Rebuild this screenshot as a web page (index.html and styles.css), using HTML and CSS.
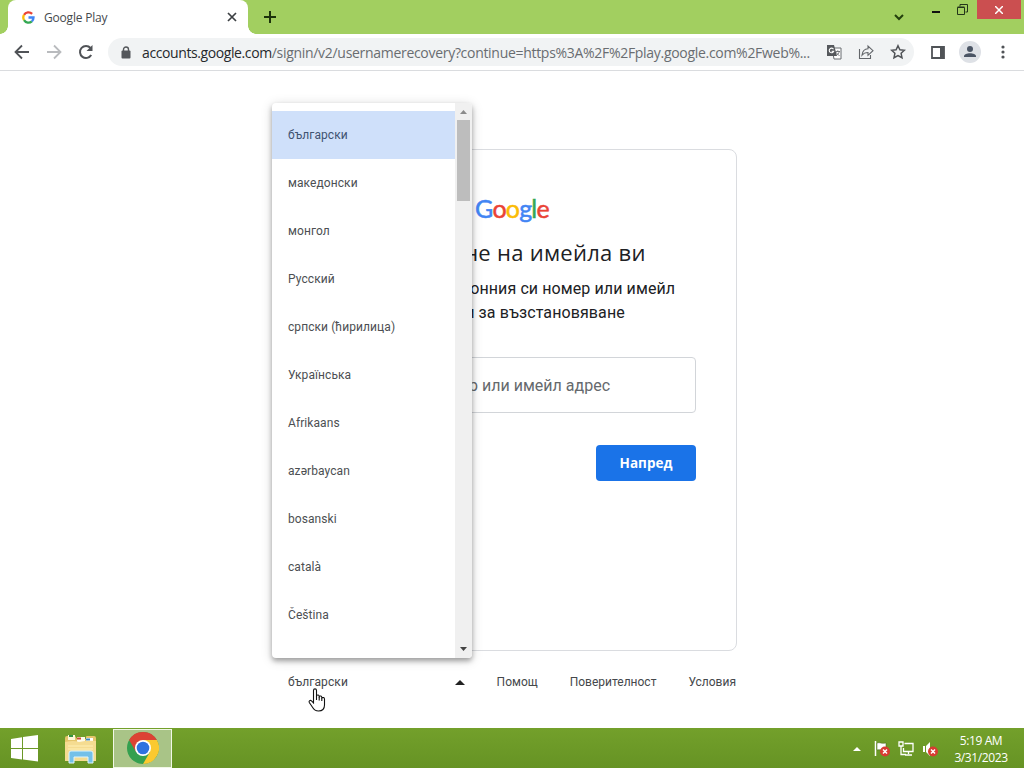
FILE: index.html
```html
<!DOCTYPE html>
<html lang="bg">
<head>
  <meta charset="UTF-8" />
  <meta name="viewport" content="width=device-width, initial-scale=1.0"/>
  <title>Google Play</title>
  <link rel="stylesheet" href="styles.css">
</head>
<body>
  <!-- Tab strip -->
  <header class="tab-strip">
    <div class="tab">
      <svg class="favicon" viewBox="0 0 14 14" fill="none" stroke-width="2.5">
        <path d="M2.2 4.2A5.5 5.5 0 0 1 10.9 3.1" stroke="#ea4335"/>
        <path d="M2.2 4.2A5.5 5.5 0 0 0 2.2 9.8" stroke="#fbbc05"/>
        <path d="M2.2 9.8A5.5 5.5 0 0 0 10.6 11.1" stroke="#34a853"/>
        <path d="M10.6 11.1A5.5 5.5 0 0 0 12.4 7H7" stroke="#4285f4"/>
      </svg>
      <span class="tab-title">Google Play</span>
      <svg class="tab-close" viewBox="0 0 10 10"><path d="M1 1l8 8M9 1L1 9" stroke="#3c4043" stroke-width="1.7"/></svg>
    </div>
    <svg class="new-tab" viewBox="0 0 12 12"><path d="M6 0v12M0 6h12" stroke="#1c330b" stroke-width="2"/></svg>
    <div class="window-controls">
      <svg class="chevron" viewBox="0 0 10 7"><path d="M1 1l4 4 4-4" fill="none" stroke="#23400d" stroke-width="2"/></svg>
      <svg class="minimize" viewBox="0 0 8 2"><path d="M0 1h8" stroke="#111" stroke-width="2"/></svg>
      <svg class="restore" viewBox="0 0 11 11" fill="none" stroke="#23351a"><path d="M.5 3.5h7v7h-7zM.5 3h7M3 2.5v-2h7.5v7.5h-2"/></svg>
      <div class="close"><svg viewBox="0 0 8 8"><path d="M0 0l8 8M8 0L0 8" stroke="#fff" stroke-width="1.5"/></svg></div>
    </div>
  </header>

  <!-- Toolbar -->
  <nav class="toolbar">
    <svg class="nav-icon" viewBox="0 0 16 16" fill="none" stroke="#505357" stroke-width="1.8"><path d="M15 8H2M8 1.5L1.5 8 8 14.5"/></svg>
    <svg class="nav-icon" viewBox="0 0 16 16" fill="none" stroke="#b9bbbe" stroke-width="1.8"><path d="M1 8h13M8 1.5L14.5 8 8 14.5"/></svg>
    <svg class="nav-icon" viewBox="0 0 16 16"><path d="M13.2 11A6 6 0 1 1 12.5 4" fill="none" stroke="#505357" stroke-width="2"/><path d="M14.5 1v6h-6z" fill="#505357"/></svg>
    <div class="address-bar">
      <svg class="lock" viewBox="0 0 10 13"><rect x=".5" y="4.5" width="9" height="8" rx="1" fill="#54575b"/><path d="M2.5 5V3.5a2.5 2.5 0 0 1 5 0V5" fill="none" stroke="#54575b" stroke-width="1.4"/></svg>
      <span class="url"><b>accounts.google.com</b>/signin/v2/usernamerecovery?continue=https%3A%2F%2Fplay.google.com%2Fweb%...</span>
      <svg class="bar-icon translate" viewBox="0 0 16 16">
        <path d="M6 4h9v11H8z" fill="#fff" stroke="#696c70"/>
        <path d="M1 1h7l3 11H1z" fill="#55585c"/>
        <path d="M7.5 5.2A2.3 2.3 0 1 0 7.7 7.3H5.6" fill="none" stroke="#fff" stroke-width="1.1"/>
        <path d="M9.5 7.5h4.5M11.8 6.3v1.2M13.3 7.5c-.5 2-1.5 3-3 4M10.5 8.5c.7 1.5 1.6 2.4 3 3" fill="none" stroke="#696c70" stroke-width=".9"/>
      </svg>
      <svg class="bar-icon share" viewBox="0 0 16 16" fill="none" stroke="#63666a" stroke-width="1.1"><path d="M1.5 5v9.5h11V11"/><path d="M4 11.2c.4-4 2.5-6.2 6-6.4V2l5 4.7-5 4.6V8.5c-2.7 0-4.5.8-6 2.7z"/></svg>
      <svg class="bar-icon star" viewBox="0 0 16 16"><path d="M8 1.7l1.9 4.1 4.5.5-3.3 3 .9 4.4L8 11.5l-4 2.2.9-4.400-3.3-3 4.5-.5z" fill="none" stroke="#505357" stroke-width="1.5"/></svg>
    </div>
    <svg class="side-panel" viewBox="0 0 14 13"><path d="M1 1h12v11H1z" fill="none" stroke="#505357" stroke-width="1.8"/><path d="M9 1h4v11H9z" fill="#505357"/></svg>
    <div class="avatar"><svg viewBox="0 0 12 12"><circle cx="6" cy="3" r="3" fill="#4b5565"/><path d="M0 11v-.8C0 8.2 3 7.2 6 7.2s6 1 6 3v.8z" fill="#4b5565"/></svg></div>
    <svg class="menu-dots" viewBox="0 0 4 14" fill="#505357"><circle cx="2" cy="2" r="1.6"/><circle cx="2" cy="7" r="1.6"/><circle cx="2" cy="12" r="1.6"/></svg>
  </nav>

  <!-- Sign-in page -->
  <main class="page">
    <section class="card">
      <div class="logo"><span class="blue">G</span><span class="red">o</span><span class="yellow">o</span><span class="blue">g</span><span class="green">l</span><span class="red">e</span></div>
      <h1>Намиране на имейла ви</h1>
      <p class="subtitle">Въведете телефонния си номер или имейл<br>адреса си за възстановяване</p>
      <div class="field">Телефонен номер или имейл адрес</div>
      <button class="next">Напред</button>
    </section>
    <footer class="page-footer">
      <div class="language">
        <span>български</span>
        <svg viewBox="0 0 10 5"><path d="M0 5l5-5 5 5z" fill="#222"/></svg>
      </div>
      <a>Помощ</a>
      <a>Поверителност</a>
      <a>Условия</a>
    </footer>

    <!-- Language dropdown, lies over the card -->
    <div class="dropdown">
      <ul>
        <li class="selected">български</li>
        <li>македонски</li>
        <li>монгол</li>
        <li>Русский</li>
        <li>српски (ћирилица)</li>
        <li>Українська</li>
        <li>Afrikaans</li>
        <li>azərbaycan</li>
        <li>bosanski</li>
        <li>català</li>
        <li>Čeština</li>
      </ul>
      <div class="scrollbar">
        <svg viewBox="0 0 7 4"><path d="M0 4l3.5-4L7 4z" fill="#8b8b8b"/></svg>
        <div class="thumb"></div>
        <svg class="down" viewBox="0 0 7 4"><path d="M0 0l3.5 4L7 0z" fill="#444"/></svg>
      </div>
    </div>

    <svg class="cursor" viewBox="0 0 18 24"><path d="M5.5 14V2.5c0-2.2 3-2.2 3 0V9V7.500c1-1 2.7-.5 2.7 1V10V8.5c1-1 2.6-.4 2.6 1V11V9.8c1.2-.8 2.7-.2 2.7 1.4V17c0 4-2.5 6-6 6-3 0-4.6-1.3-6-3.8L1.3 14.5c-.8-1.7 1-2.7 2.2-1.6l2 2z" fill="#fff" stroke="#111" stroke-width="1.1"/><path d="M8.5 8.5V12M11.2 9.5V12.5M13.8 10.5V13" stroke="#111" stroke-width="1.1"/></svg>
  </main>

  <!-- Taskbar -->
  <div class="taskbar">
    <svg class="start" viewBox="0 0 27 27" fill="#fff"><path d="M0 4l11-1.7V13H0zM12 2.1L27 0v13H12zM0 14h11v10.5L0 23zM12 14h15v12.5l-15-2z"/></svg>
    <svg class="explorer" viewBox="0 0 34 30">
      <path d="M1 4q0-2 2-2h8l2 3h9V3q0-1 1-1h7q2 0 2 2v23H1z" fill="#e5c56b"/>
      <path d="M4 1h7v5H4z" fill="#fff6d5"/><path d="M5 2h4" stroke="#349343" stroke-width="2"/>
      <path d="M13 3h8v5h-8z" fill="#fffbe9"/><path d="M13 4.500h4" stroke="#cc4c35" stroke-width="2"/>
      <path d="M22 4h7v4h-7z" fill="#fff"/><path d="M22 5.500h4" stroke="#3f86bd" stroke-width="2"/>
      <path d="M1 8q9-2 14 0 9-2 17-1v20H1z" fill="#f5dc91"/>
      <path d="M4 12h25M4 15h25" stroke="#fff0b5"/>
      <path d="M5 29V19q0-2 2-2h20q2 0 2 2v10h-5v-6H10v6z" fill="#74c0e8" stroke="#def4fd"/>
    </svg>
    <div class="task-active">
      <svg viewBox="0 0 32 32">
        <circle cx="16" cy="16" r="16" fill="#34a04f"/>
        <path d="M2.14 8A16 16 0 0 1 29.86 8H16L9.07 20z" fill="#dc4334"/>
        <path d="M29.86 8A16 16 0 0 1 16 32l6.93-12L16 8z" fill="#fbc92f"/>
        <circle cx="16" cy="16" r="8" fill="#fff"/><circle cx="16" cy="16" r="6.3" fill="#2e72df"/>
      </svg>
    </div>
    <div class="tray">
      <svg class="tray-arrow" viewBox="0 0 8 4"><path d="M0 4l4-4 4 4z" fill="#fff"/></svg>
      <svg class="tray-icon" viewBox="0 0 16 16"><path d="M1.5 0v15" stroke="#fff" stroke-width="1.5"/><path d="M3 2c3-1 4 1 9 0v7c-4 1-6-1-9 0z" fill="#fff" stroke="#3e5f16" stroke-width=".5"/><circle cx="11" cy="10.500" r="5" fill="#d83b32"/><path d="M9 8.500l4 4M13 8.500l-4 4" stroke="#fff" stroke-width="1.5"/></svg>
      <svg class="tray-icon" viewBox="0 0 16 16" fill="none" stroke="#fff" stroke-width="1.3"><path d="M1 1h4v4H1zM3 5v8.500h5M6.500 2.500H15v8H5.500V7M10.500 10.500V13M7 14h7"/></svg>
      <svg class="tray-icon" viewBox="0 0 16 16"><path d="M1 5h2v6H1zM4 5l4-4v14l-4-4z" fill="#fff"/><circle cx="11" cy="10.500" r="5" fill="#d83b32"/><path d="M9 8.500l4 4M13 8.500l-4 4" stroke="#fff" stroke-width="1.5"/></svg>
      <div class="clock"><span>5:19 AM</span><span class="date">3/31/2023</span></div>
    </div>
  </div>
</body>
</html>
```
FILE: styles.css
```css
* {
  box-sizing: border-box;
  margin: 0;
  padding: 0;
}
body {
  font-family: Roboto, sans-serif;
  width: 1024px;
  height: 768px;
  display: flex;
  flex-direction: column;
  overflow: hidden;
  background: #fff;
}
svg {
  display: block;
  flex: none;
}

/* Tab strip */
.tab-strip {
  height: 34px;
  background: #a2cf60;
  display: flex;
  align-items: flex-start;
  padding-left: 8px;
  font-family: "Open Sans", sans-serif;
}
.tab {
  position: relative;
  width: 240px;
  height: 34px;
  background: #fff;
  border-radius: 8px 8px 0 0;
  display: flex;
  align-items: center;
  padding: 0 11px 0 14px;
}
.tab::before,
.tab::after {
  content: "";
  position: absolute;
  bottom: 0;
  width: 8px;
  height: 8px;
}
.tab::before {
  left: -8px;
  background: radial-gradient(circle at 0 0, transparent 7.5px, #fff 8px);
}
.tab::after {
  right: -8px;
  background: radial-gradient(circle at 100% 0, transparent 7.5px, #fff 8px);
}
.favicon {
  width: 13px;
  height: 13px;
  margin-right: 9px;
}
.tab-title {
  flex: 1;
  font-size: 12px;
  letter-spacing: -0.2px;
  color: #45494d;
}
.tab-close {
  width: 10px;
  height: 10px;
}
.new-tab {
  width: 12px;
  height: 12px;
  margin: 11px 0 0 16px;
}
.window-controls {
  margin-left: auto;
  display: flex;
  align-items: flex-start;
}
.chevron {
  width: 10px;
  height: 7px;
  margin: 14px 28px 0 0;
}
.minimize {
  width: 8px;
  height: 2px;
  margin: 11px 17px 0 0;
}
.restore {
  width: 11px;
  height: 11px;
  margin: 4px 9px 0 0;
}
.close {
  width: 44px;
  height: 19px;
  margin-right: 3px;
  background: #cb4f50;
  display: flex;
  align-items: center;
  justify-content: center;
}
.close svg {
  width: 8px;
  height: 8px;
}

/* Toolbar */
.toolbar {
  height: 37px;
  border-bottom: 1px solid #dadcdf;
  display: flex;
  align-items: center;
  padding: 0 19px 0 14px;
}
.nav-icon {
  width: 16px;
  height: 16px;
  margin-right: 16px;
}
.address-bar {
  width: 806px;
  height: 28px;
  margin-left: -2px;
  border-radius: 14px;
  background: #f1f3f4;
  display: flex;
  align-items: center;
  padding: 0 9px 0 13px;
}
.lock {
  width: 10px;
  height: 13px;
  margin-right: 11px;
}
.url {
  flex: none;
  width: 677px;
  font-family: "Open Sans", sans-serif;
  font-size: 14px;
  letter-spacing: -0.3px;
  white-space: nowrap;
  color: #696d71;
}
.url b {
  font-weight: normal;
  letter-spacing: -0.4px;
  color: #26292c;
}
.bar-icon {
  width: 16px;
  height: 16px;
  margin-left: 16px;
}
.bar-icon.translate {
  margin-left: 7px;
}
.side-panel {
  width: 14px;
  height: 13px;
  margin-left: 17px;
}
.avatar {
  width: 22px;
  height: 22px;
  margin-left: 14px;
  border-radius: 50%;
  background: #dee1e6;
  display: flex;
  align-items: center;
  justify-content: center;
}
.avatar svg {
  width: 12px;
  height: 12px;
}
.menu-dots {
  width: 4px;
  height: 14px;
  margin-left: auto;
}

/* Sign-in page */
.page {
  position: relative;
  flex: 1;
  display: flex;
  flex-direction: column;
  align-items: center;
  padding-top: 78px;
}
.card {
  width: 450px;
  height: 502px;
  border: 1px solid #dadce0;
  border-radius: 8px;
  padding: 42px 40px 0;
  display: flex;
  flex-direction: column;
  align-items: center;
  color: #202124;
}
.logo {
  font-family: Lato, sans-serif;
  font-size: 25px;
  line-height: 32px;
  letter-spacing: -0.8px;
  -webkit-text-stroke: 0.5px;
}
.blue { color: #4285f4; }
.red { color: #ea4335; }
.yellow { color: #fbbc05; }
.green { color: #34a853; }
.card h1 {
  margin-top: 12px;
  font-family: "Open Sans", sans-serif;
  font-size: 22px;
  font-weight: 400;
  line-height: 32px;
  letter-spacing: 0.28px;
  white-space: nowrap;
}
.subtitle {
  margin-top: 9px;
  font-size: 16px;
  line-height: 24px;
  letter-spacing: 0.1px;
  text-align: center;
  white-space: nowrap;
}
.field {
  width: 368px;
  height: 56px;
  margin-top: 32px;
  border: 1px solid #d2d5d9;
  border-radius: 4px;
  padding: 0 85px 0 14px;
  line-height: 56px;
  font-size: 16px;
  text-align: right;
  white-space: nowrap;
  color: #65696d;
}
.next {
  align-self: flex-end;
  width: 100px;
  height: 36px;
  margin-top: 32px;
  border: none;
  border-radius: 4px;
  background: #1a73e8;
  color: #fff;
  font: 700 13.5px "Open Sans", sans-serif;
}
.page-footer {
  width: 448px;
  height: 62px;
  display: flex;
  align-items: center;
  gap: 32px;
  font-size: 12px;
  color: #45484b;
}
.language {
  flex: 1;
  display: flex;
  align-items: center;
  justify-content: space-between;
  letter-spacing: 0.1px;
}
.language svg {
  width: 10px;
  height: 5px;
}

/* Language dropdown */
.dropdown {
  position: absolute;
  left: 272px;
  top: 32px;
  width: 200px;
  height: 555px;
  display: flex;
  background: #fff;
  border-radius: 4px;
  overflow: hidden;
  box-shadow: 0 3px 5px rgba(0, 0, 0, 0.3), 0 2px 12px rgba(0, 0, 0, 0.17);
}
.dropdown ul {
  flex: 1;
  padding-top: 8px;
  list-style: none;
}
.dropdown li {
  height: 48px;
  padding-left: 16px;
  line-height: 48px;
  font-size: 12px;
  letter-spacing: 0.08px;
  color: #4c4f52;
}
.dropdown .selected {
  background: #cfe0fa;
  color: #405371;
}
.scrollbar {
  width: 17px;
  background: #f0f0f0;
  display: flex;
  flex-direction: column;
  align-items: center;
  padding: 7px 2px;
}
.scrollbar svg {
  width: 7px;
  height: 4px;
}
.thumb {
  width: 13px;
  height: 81px;
  margin-top: 6px;
  background: #bdbdbd;
}
.scrollbar .down {
  margin-top: auto;
}
.cursor {
  position: absolute;
  left: 308px;
  top: 617px;
  width: 18px;
  height: 24px;
}

/* Taskbar */
.taskbar {
  height: 40px;
  background: linear-gradient(#73a02b, #669324);
  display: flex;
  align-items: center;
  padding-left: 11px;
}
.start {
  width: 27px;
  height: 27px;
}
.explorer {
  width: 34px;
  height: 30px;
  margin: 2px 0 0 26px;
}
.task-active {
  width: 59px;
  height: 39px;
  margin-left: 15px;
  border: 1px solid #f1f7e6;
  background: #a9c487;
  display: flex;
  align-items: center;
  justify-content: center;
}
.task-active svg {
  width: 32px;
  height: 32px;
}
.tray {
  margin-left: auto;
  display: flex;
  align-items: center;
}
.tray-arrow {
  width: 8px;
  height: 4px;
  margin: 2px 13px 0 0;
}
.tray-icon {
  width: 16px;
  height: 16px;
  margin: 2px 8px 0 0;
}
.clock {
  width: 86px;
  margin: 2px 0 0 -8px;
  display: flex;
  flex-direction: column;
  align-items: center;
  font: 12px/17px "Open Sans", sans-serif;
  letter-spacing: -0.4px;
  color: #fff;
}
```
